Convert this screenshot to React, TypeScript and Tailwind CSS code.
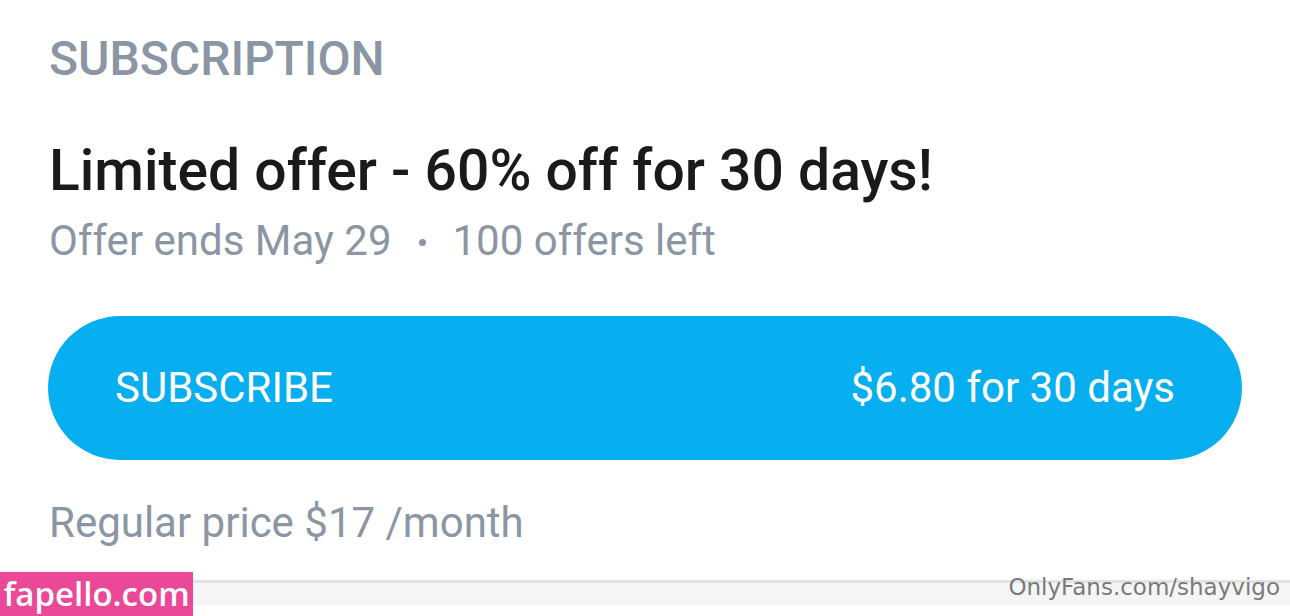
export default function App() {
  return (
    <div className="w-[1290px] h-[616px] bg-white overflow-hidden flex flex-col" style={{ fontFamily: "Roboto, 'Noto Sans', sans-serif" }}>
      <div className="pl-[49px] pr-[48px] flex flex-col">
        <div className="mt-[29px] h-[60px] flex items-center text-[48px] font-medium text-[#8a96a3] leading-none">SUBSCRIPTION</div>
        <div className="mt-[50px] h-[62px] flex items-center text-[57px] font-medium text-[#1a1a1a] leading-none">Limited offer - 60% off for 30 days!</div>
        <div className="mt-[17px] h-[46px] flex items-center text-[42px] text-[#8a96a3] leading-none">
          <span>Offer ends May 29</span>
          <span className="ml-[28px] mr-[26px] mt-[3px] w-[7px] h-[7px] rounded-full bg-[#8a96a3]" />
          <span>100 offers left</span>
        </div>
        <div className="mt-[52px] -ml-[1px] h-[144px] rounded-full bg-[#07aff0] flex items-center justify-between pl-[67px] pr-[67px] text-white text-[42px] leading-none">
          <span>SUBSCRIBE</span>
          <span>$6.80 for 30 days</span>
        </div>
        <div className="mt-[38px] h-[50px] flex items-center text-[42px] text-[#8a96a3] leading-none">Regular price $17 /month</div>
      </div>
      <div className="mt-[24px] h-[44px] flex">
        <div className="w-[193px] h-[44px] bg-[#eb4897] flex items-center justify-center text-white text-[33px] font-semibold leading-none pb-[2px]" style={{ fontFamily: "'Open Sans', sans-serif" }}>fapello.com</div>
        <div className="relative flex-1 flex flex-col">
          <div className="h-[8px]" />
          <div className="h-[3px] bg-[#e3e3e3]" />
          <div className="h-[22px] bg-[#f5f5f5]" />
          <div className="flex-1 bg-white" />
          <div className="absolute right-[10px] top-[4px] text-[23px] text-[#7a7a7a] leading-none" style={{ fontFamily: "'DejaVu Sans', sans-serif" }}>OnlyFans.com/shayvigo</div>
        </div>
      </div>
    </div>
  );
}
